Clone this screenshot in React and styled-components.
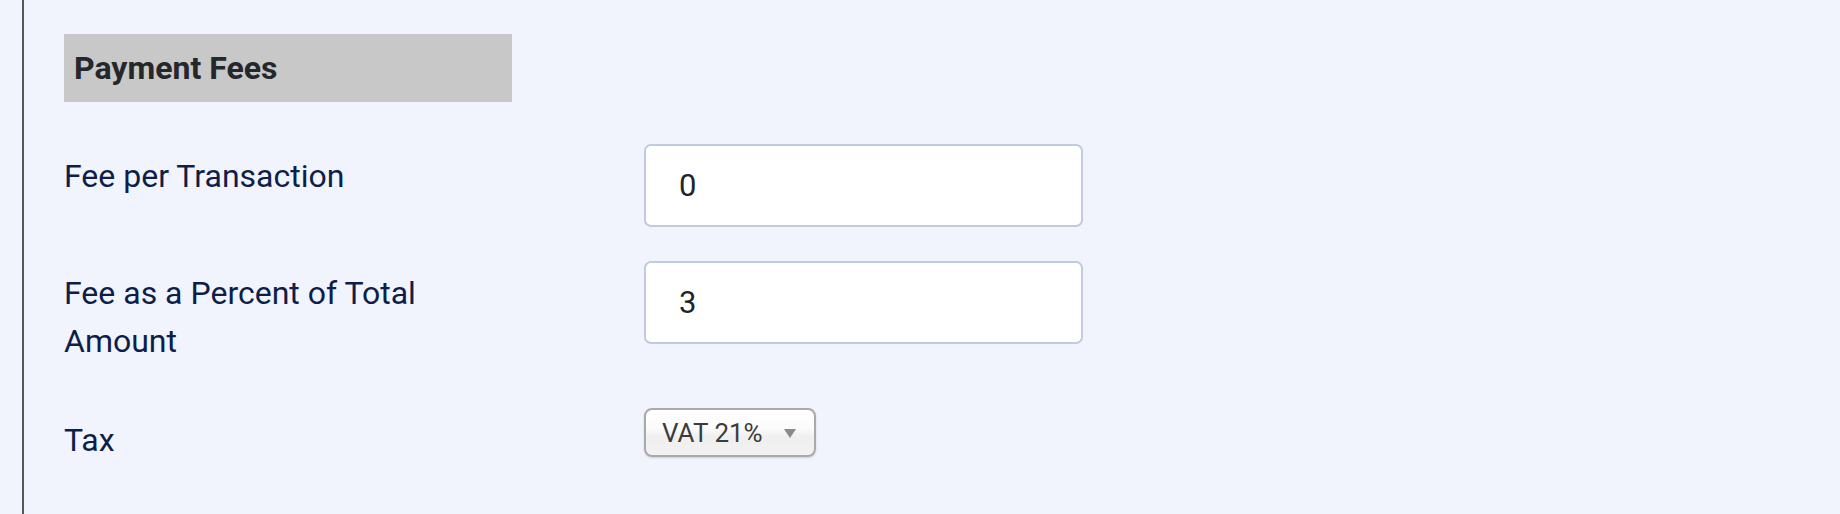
import React from "react";
import styled, { createGlobalStyle } from "styled-components";

const GlobalStyle = createGlobalStyle`
  html, body {
    margin: 0;
    padding: 0;
    background: #f1f4fc;
  }
  body {
    font-family: Roboto, "Liberation Sans", Arial, sans-serif;
  }
`;

const Page = styled.div`
  min-height: 514px;
  padding-left: 22px;
  box-sizing: border-box;
`;

const Panel = styled.section`
  min-height: 514px;
  border-left: 2px solid #575757;
  padding: 34px 0 0 40px;
  box-sizing: border-box;
`;

const SectionTitle = styled.h2`
  margin: 0 0 42px;
  width: 448px;
  height: 68px;
  box-sizing: border-box;
  padding: 0 10px;
  display: flex;
  align-items: center;
  background: #c8c8c8;
  color: #25272b;
  font-size: 32px;
  font-weight: 700;
`;

const Row = styled.div`
  display: flex;
  align-items: flex-start;
  margin-bottom: 34px;
`;

const Label = styled.label`
  width: 580px;
  flex-shrink: 0;
  padding: 8px 0 9px;
  box-sizing: border-box;
  color: #0d1e4b;
  font-size: 32px;
  line-height: 48px;
`;

const LabelText = styled.span`
  display: block;
  max-width: 380px;
`;

const TextInput = styled.input`
  width: 439px;
  height: 83px;
  box-sizing: border-box;
  padding: 0 33px;
  border: 2px solid #c0cbe0;
  border-radius: 7px;
  background: #fff;
  color: #222427;
  font-family: Roboto, "Liberation Sans", Arial, sans-serif;
  font-size: 31px;
  outline: none;
`;

const SelectWrap = styled.div`
  position: relative;
  width: 172px;
  height: 49px;
`;

const Select = styled.select`
  appearance: none;
  -webkit-appearance: none;
  width: 100%;
  height: 100%;
  box-sizing: border-box;
  padding: 0 0 0 16px;
  border: 2px solid #a9a9a9;
  border-radius: 8px;
  background: linear-gradient(#ffffff 0%, #fbfbfb 40%, #efefef 60%, #f2f2f2 100%);
  box-shadow: 0 1px 2px rgba(0, 0, 0, 0.15);
  color: #3c3c3c;
  font-family: Roboto, "Liberation Sans", Arial, sans-serif;
  font-size: 26px;
  outline: none;
`;

const Arrow = styled.svg`
  position: absolute;
  right: 20px;
  top: 21px;
  pointer-events: none;
`;

const App = () => {
  return (
    <>
      <GlobalStyle />
      <Page>
        <Panel>
          <SectionTitle>Payment Fees</SectionTitle>
          <Row>
            <Label>
              <LabelText>Fee per Transaction</LabelText>
            </Label>
            <TextInput defaultValue="0" />
          </Row>
          <Row>
            <Label>
              <LabelText>Fee as a Percent of Total Amount</LabelText>
            </Label>
            <TextInput defaultValue="3" />
          </Row>
          <Row>
            <Label>
              <LabelText>Tax</LabelText>
            </Label>
            <SelectWrap>
              <Select defaultValue="vat21">
                <option value="vat21">VAT 21%</option>
                <option value="none">No tax</option>
              </Select>
              <Arrow width="12" height="9" viewBox="0 0 12 9">
                <path d="M0 0 H12 L6 9 Z" fill="#8a8a8a" />
              </Arrow>
            </SelectWrap>
          </Row>
        </Panel>
      </Page>
    </>
  );
};

export default App;
